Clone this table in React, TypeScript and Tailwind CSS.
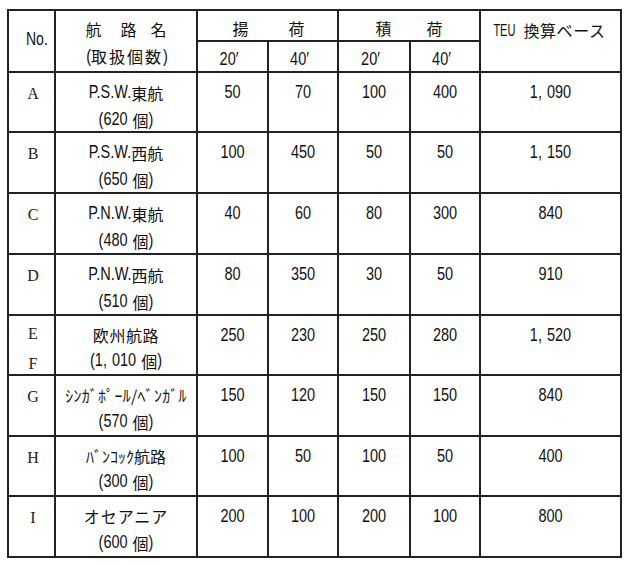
import React from "react";

type CellProps = { children?: React.ReactNode; className?: string; last?: boolean };

function Cell({ children, className = "", last = false }: CellProps) {
  return (
    <div className={`border-b-2 ${last ? "" : "border-r-2"} border-[#222] ${className}`}>
      {children}
    </div>
  );
}

/* Japanese text */
function J({ children, className = "" }: { children: React.ReactNode; className?: string }) {
  return (
    <span className={`font-['Noto_Sans_CJK_JP',sans-serif] text-[16px] leading-none ${className}`}>{children}</span>
  );
}

/* condensed (tall, narrow) latin / numerals */
function N({ children, className = "" }: { children: React.ReactNode; className?: string }) {
  return <span className={`inline-block scale-y-[1.25] ${className}`}>{children}</span>;
}

type Row = {
  no: React.ReactNode;
  noClass: string;
  name: React.ReactNode;
  count: React.ReactNode;
  vals: string[];
  teu: React.ReactNode;
};

function Comma({ a, b }: { a: string; b: string }) {
  return (
    <>
      {a}
      <span className="mr-[5px]">,</span>
      {b}
    </>
  );
}

const rows: Row[] = [
  {
    no: "A",
    noClass: "pt-[6px] leading-[29px]",
    name: (
      <>
        <N>P.S.W.</N>
        <J>東航</J>
      </>
    ),
    count: "620",
    vals: ["50", "70", "100", "400"],
    teu: <Comma a="1" b="090" />,
  },
  {
    no: "B",
    noClass: "pt-[6px] leading-[29px]",
    name: (
      <>
        <N>P.S.W.</N>
        <J>西航</J>
      </>
    ),
    count: "650",
    vals: ["100", "450", "50", "50"],
    teu: <Comma a="1" b="150" />,
  },
  {
    no: "C",
    noClass: "pt-[6px] leading-[29px]",
    name: (
      <>
        <N>P.N.W.</N>
        <J>東航</J>
      </>
    ),
    count: "480",
    vals: ["40", "60", "80", "300"],
    teu: "840",
  },
  {
    no: "D",
    noClass: "pt-[6px] leading-[29px]",
    name: (
      <>
        <N>P.N.W.</N>
        <J>西航</J>
      </>
    ),
    count: "510",
    vals: ["80", "350", "30", "50"],
    teu: "910",
  },
  {
    no: (
      <>
        <div>E</div>
        <div>F</div>
      </>
    ),
    noClass: "pt-[3px] leading-[30px]",
    name: <J className="tracking-[0.6px]">欧州航路</J>,
    count: <Comma a="1" b="010" />,
    vals: ["250", "230", "250", "280"],
    teu: <Comma a="1" b="520" />,
  },
  {
    no: "G",
    noClass: "pt-[6px] leading-[29px]",
    name: <J className="text-[15px] tracking-[0.3px]">ｼﾝｶﾞﾎﾟｰﾙ/ﾍﾞﾝｶﾞﾙ</J>,
    count: "570",
    vals: ["150", "120", "150", "150"],
    teu: "840",
  },
  {
    no: "H",
    noClass: "pt-[6px] leading-[29px]",
    name: (
      <>
        <J className="text-[15px]">ﾊﾞﾝｺｯｸ</J>
        <J>航路</J>
      </>
    ),
    count: "300",
    vals: ["100", "50", "100", "50"],
    teu: "400",
  },
  {
    no: "I",
    noClass: "pt-[6px] leading-[29px]",
    name: <J className="tracking-[1px]">オセアニア</J>,
    count: "600",
    vals: ["200", "100", "200", "100"],
    teu: "800",
  },
];

export default function App() {
  return (
    <div className="w-[635px] h-[566px] pt-[9px] bg-white text-[#111] font-['Liberation_Sans','Noto_Sans_CJK_JP',sans-serif] text-[14.5px]">
      <div className="ml-[7px] w-[615px] border-l-2 border-t-2 border-r-2 border-[#222] grid grid-cols-[47px_142px_71px_70px_72px_70px_139px] grid-rows-[31px_31px_60px_61px_61px_61px_60px_61px_60px_61px]">
        {/* header */}
        <Cell className="row-span-2 flex items-center pl-[17px] pb-[4px] leading-none">
          <N className="text-[14px] scale-y-[1.4]">No.</N>
        </Cell>
        <Cell className="row-span-2 flex flex-col items-center justify-center pt-[5px] leading-[30px]">
          <div className="flex items-center h-[30px]">
            <J className="mr-[19px]">航</J>
            <J className="mr-[14px]">路</J>
            <J>名</J>
          </div>
          <div className="flex items-center h-[30px] pl-[2px]">
            <N>(</N>
            <J className="tracking-[2px]">取扱個数</J>
            <N>)</N>
          </div>
        </Cell>
        <Cell className="col-span-2 flex items-center justify-center pt-[4px] pl-[2px]">
          <J className="mr-[40px]">揚</J>
          <J>荷</J>
        </Cell>
        <Cell className="col-span-2 flex items-center justify-center pt-[4px]">
          <J className="mr-[35px]">積</J>
          <J>荷</J>
        </Cell>
        <Cell last className="row-span-2 flex justify-center items-start pt-[11px] pr-[2px]">
          <span className="flex items-center h-[16px]">
            <N className="text-[11px] leading-[16px] scale-y-[1.45] mr-[8px]">TEU</N>
            <J className="tracking-[0.6px]">換算ベース</J>
          </span>
        </Cell>
        {["20′", "40′", "20′", "40′"].map((t, i) => (
          <Cell key={i} className="flex items-center justify-center pt-[6px] leading-none">
            <N className="pr-[7px]">{t}</N>
          </Cell>
        ))}

        {/* body */}
        {rows.map((r, i) => (
          <React.Fragment key={i}>
            <Cell
              className={`flex flex-col items-center pl-[3px] font-['Liberation_Serif',serif] text-[16px] text-[#222] ${r.noClass}`}
            >
              {typeof r.no === "string" ? <div>{r.no}</div> : r.no}
            </Cell>
            <Cell className="flex flex-col items-center pt-[6px] leading-[27px] whitespace-nowrap">
              <div className="h-[27px] flex items-center">{r.name}</div>
              <div className="h-[27px] flex items-center">
                <N>({r.count}</N>
                <J className="ml-[5px]">個</J>
                <N>)</N>
              </div>
            </Cell>
            {r.vals.map((v, j) => (
              <Cell key={j} className="flex justify-center items-start pt-[6px] leading-[27px]">
                <N>{v}</N>
              </Cell>
            ))}
            <Cell last className="flex justify-center items-start pt-[6px] leading-[27px]">
              <N>{r.teu}</N>
            </Cell>
          </React.Fragment>
        ))}
      </div>
    </div>
  );
}
